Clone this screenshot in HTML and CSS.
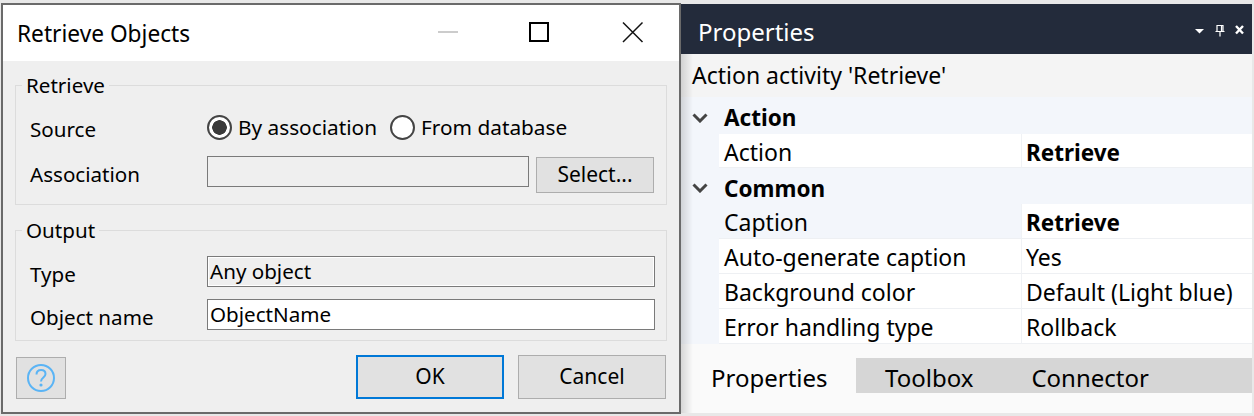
FILE: index.html
```html
<!DOCTYPE html>
<html>
  <head>
    <title>Retrieve Objects</title>
    <link rel="stylesheet" href="styles.css">
  </head>
  <body>
    <div class="dialog">
      <div class="titlebar">
        <span class="title">Retrieve Objects</span>
        <svg class="winbtn" width="230" height="24" viewBox="0 0 230 24">
          <path d="M5 11h20" stroke="#ccc" stroke-width="2" fill="none"/>
          <rect x="97" y="2" width="18" height="18" stroke="#000" stroke-width="2" fill="none"/>
          <path d="M190 1.500l19.500 19.500M209.500 1.500l-19.500 19.500" stroke="#111" stroke-width="1.500" fill="none"/>
        </svg>
      </div>
      <div class="content">
        <fieldset class="group group-retrieve">
          <legend>Retrieve</legend>
          <div class="row row-source">
            <label class="lbl">Source</label>
            <span class="radio checked"></span><span class="radio-text">By association</span>
            <span class="radio"></span><span class="radio-text">From database</span>
          </div>
          <div class="row row-assoc">
            <label class="lbl">Association</label>
            <span class="input input-short"></span>
            <button class="btn btn-select">Select...</button>
          </div>
        </fieldset>
        <fieldset class="group group-output">
          <legend>Output</legend>
          <div class="row row-type">
            <label class="lbl">Type</label>
            <span class="input input-wide">Any object</span>
          </div>
          <div class="row row-name">
            <label class="lbl">Object name</label>
            <span class="input input-wide input-white">ObjectName</span>
          </div>
        </fieldset>
        <div class="footer">
          <button class="btn btn-help">
            <svg width="30" height="30" viewBox="0 0 30 30">
              <circle cx="15" cy="15" r="13" stroke="#5ab4f5" stroke-width="2" fill="none"/>
              <path d="M10.500 11.500c0-2.800 2-4.500 4.600-4.500s4.400 1.700 4.400 4c0 3.600-4.500 3.400-4.500 7.500" stroke="#5ab4f5" stroke-width="2" fill="none"/>
              <circle cx="15" cy="22" r="1.600" fill="#5ab4f5"/>
            </svg>
          </button>
          <button class="btn btn-ok">OK</button>
          <button class="btn btn-cancel">Cancel</button>
        </div>
      </div>
    </div>

    <div class="panel">
      <div class="panel-head">
        <span>Properties</span>
        <svg class="panel-icons" width="54" height="14" viewBox="0 0 54 14">
          <path d="M0 5h9l-4.500 4.500z" fill="#fff"/>
          <path d="M22 1.500h6v6h-6zM20.500 7.500h9M25 7.500v5M26.500 1.500v6" stroke="#fff" stroke-width="1.200" fill="none"/>
          <path d="M41 2l7 7.500M48 2l-7 7.500" stroke="#fff" stroke-width="2.400" fill="none"/>
        </svg>
      </div>
      <div class="panel-sub">Action activity 'Retrieve'</div>
      <div class="cat">
        <svg width="16" height="10" viewBox="0 0 16 10"><path d="M1.500 1.500l6.500 6.500 6.500-6.500" stroke="#444" stroke-width="3" fill="none"/></svg>
        <b>Action</b>
      </div>
      <div class="prop prop-first">
        <div class="prop-name">Action</div>
        <div class="prop-val"><b>Retrieve</b></div>
      </div>
      <div class="cat">
        <svg width="16" height="10" viewBox="0 0 16 10"><path d="M1.500 1.500l6.500 6.500 6.500-6.500" stroke="#444" stroke-width="3" fill="none"/></svg>
        <b>Common</b>
      </div>
      <div class="prop">
        <div class="prop-name tinted">Caption</div>
        <div class="prop-val"><b>Retrieve</b></div>
      </div>
      <div class="prop">
        <div class="prop-name">Auto-generate caption</div>
        <div class="prop-val">Yes</div>
      </div>
      <div class="prop">
        <div class="prop-name">Background color</div>
        <div class="prop-val">Default (Light blue)</div>
      </div>
      <div class="prop">
        <div class="prop-name">Error handling type</div>
        <div class="prop-val">Rollback</div>
      </div>
      <div class="tabs">
        <span class="tab active">Properties</span>
        <span class="tab tab-toolbox">Toolbox</span>
        <span class="tab">Connector</span>
      </div>
    </div>
  </body>
</html>
```

FILE: styles.css
```css
html, body {
  margin: 0;
  padding: 0;
}
body {
  width: 1254px;
  height: 416px;
  overflow: hidden;
  display: flex;
  align-items: flex-start;
  background: #e8e8e8;
  font-family: "Noto Sans", "Open Sans", sans-serif;
  color: #000;
}

/* dialog */
.dialog {
  box-sizing: border-box;
  width: 680px;
  height: 411px;
  margin: 3px 0 0 1px;
  border: 2px solid #6a6a6a;
  background: #efefef;
  display: flex;
  flex-direction: column;
  flex-shrink: 0;
}
.titlebar {
  height: 56px;
  background: #fff;
  display: flex;
  align-items: center;
  justify-content: space-between;
  padding: 0 16px 0 14px;
}
.title {
  font-size: 22.700px;
}
.content {
  flex-grow: 1;
  font-size: 20.600px;
  padding: 0 12px 0 12px;
}
.group {
  box-sizing: border-box;
  margin: 0;
  padding: 0;
  border: 1px solid #dcdcdc;
  height: 120px;
}
.group legend {
  padding: 0 4px 0 4px;
  margin-left: 6px;
  line-height: 24px;
}
.group-retrieve {
  margin-top: 12px;
  height: 132px;
}
.group-output {
  margin-top: 12px;
  height: 124px;
}
.group-output legend {
  line-height: 26px;
}
.row {
  display: flex;
  align-items: center;
  padding-left: 14px;
}
.lbl {
  width: 177px;
  flex-shrink: 0;
  margin-top: 4px;
}
.row-source { margin-top: 15px; height: 30px; }
.row-assoc { margin-top: 14px; height: 36px; align-items: flex-start; }
.row-assoc .lbl { margin-top: 4px; }
.row-type { margin-top: 13px; height: 31px; }
.row-name { margin-top: 12px; height: 31px; }

.radio {
  box-sizing: border-box;
  width: 25px;
  height: 25px;
  border: 2px solid #444;
  border-radius: 50%;
  background: #fff;
  flex-shrink: 0;
}
.radio.checked {
  background: radial-gradient(circle, #3a3a3a 0, #3a3a3a 7px, #fff 7.500px);
}
.radio-text {
  margin: 0 13px 0 6px;
  font-size: 20.800px;
}

.input {
  box-sizing: border-box;
  display: block;
  height: 31px;
  line-height: 29px;
  padding: 0 2px;
  border: 1px solid #7a7a7a;
  box-shadow: inset 0 0 0 1px #fff;
}
.input-short { width: 322px; box-shadow: none; }
.input-wide { width: 448px; }
.input-white { background: #fff; }

.btn {
  box-sizing: border-box;
  border: 1px solid #adadad;
  background: #e1e1e1;
  font-family: inherit;
  font-size: 21px;
  color: #000;
  padding: 0;
}
.btn-select {
  width: 118px;
  height: 36px;
  margin-left: 7px;
  margin-top: 1px;
  padding-bottom: 2px;
}
.footer {
  display: flex;
  align-items: flex-start;
  margin-top: 14px;
  padding-left: 1px;
}
.btn-help {
  width: 50px;
  height: 42px;
  margin-top: 2px;
  display: flex;
  align-items: center;
  justify-content: center;
  margin-right: 290px;
}
.btn-ok {
  width: 148px;
  height: 44px;
  border: 2px solid #0078d7;
  padding-bottom: 2px;
}
.btn-cancel {
  width: 148px;
  height: 44px;
  margin-left: 14px;
  padding-bottom: 2px;
}

/* properties panel */
.panel {
  box-sizing: border-box;
  position: relative;
  width: 571px;
  height: 409px;
  margin-top: 4px;
  flex-shrink: 0;
  background: #fafafa;
  font-size: 23px;
}
.panel b {
  font-size: 22.500px;
}
.panel::before {
  content: "";
  position: absolute;
  left: 0;
  top: 50px;
  bottom: 0;
  width: 12px;
  background: linear-gradient(to right, rgba(0, 0, 0, 0.14), rgba(0, 0, 0, 0));
}
.panel-head {
  height: 50px;
  background: #232b3b;
  color: #fff;
  font-size: 24px;
  line-height: 50px;
  display: flex;
  justify-content: space-between;
  padding: 0 3px 0 17px;
}
.panel-head span {
  padding-top: 3px;
  height: 47px;
}
.panel-icons {
  margin-top: 20px;
}
.panel-sub {
  height: 43px;
  line-height: 43px;
  padding-left: 11px;
  background: #f4f4f4;
}
.cat {
  box-sizing: border-box;
  height: 37px;
  padding-top: 4px;
  display: flex;
  align-items: center;
  background: #f3f6fb;
}
.cat svg {
  margin: 0 16px 0 11px;
}
.prop + .cat {
  height: 36px;
}
.prop {
  box-sizing: border-box;
  height: 35px;
  display: flex;
  padding-left: 38px;
  background: #f3f6fb;
  line-height: 35px;
}
.prop-first {
  height: 34px;
}
.prop-name, .prop-val {
  box-sizing: border-box;
  padding-top: 1px;
  background: #fff;
  border-bottom: 1px solid #eef0f3;
}
.prop-name {
  width: 303px;
  padding-left: 5px;
  border-right: 1px solid #f0f2f5;
}
.prop-name.tinted {
  background: #f3f6fb;
}
.prop-val {
  flex-grow: 1;
  padding-left: 4px;
}
.tabs {
  display: flex;
  height: 35px;
  margin-top: 14px;
  background: #d6d6d6;
  font-size: 24px;
}
.tab {
  line-height: 40px;
  padding-right: 58px;
}
.tab.active {
  width: 175px;
  box-sizing: border-box;
  padding-left: 30px;
  padding-right: 0;
  background: #fafafa;
  margin-right: 29px;
}
```
